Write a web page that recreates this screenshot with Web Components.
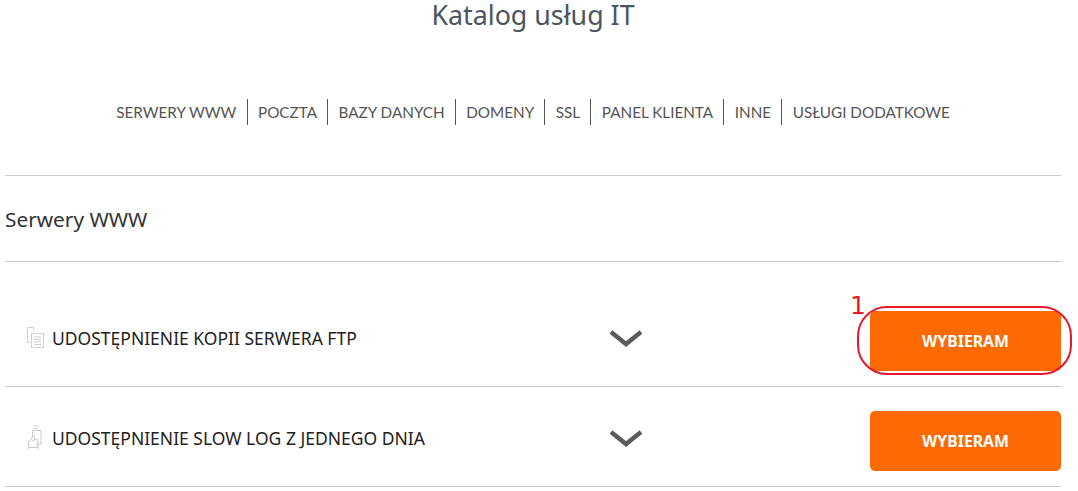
<!DOCTYPE html>
<html lang="pl">
<head>
<meta charset="utf-8">
<title>Katalog usług IT</title>
<style>
  html, body { margin: 0; padding: 0; background: #fff; overflow: hidden; }
  body { font-family: "Noto Sans", "Open Sans", sans-serif; }
</style>
</head>
<body>
<catalog-page heading="Katalog usług IT">
  <catalog-nav slot="nav">
    <nav-link>SERWERY WWW</nav-link>
    <nav-link>POCZTA</nav-link>
    <nav-link>BAZY DANYCH</nav-link>
    <nav-link>DOMENY</nav-link>
    <nav-link>SSL</nav-link>
    <nav-link>PANEL KLIENTA</nav-link>
    <nav-link>INNE</nav-link>
    <nav-link last>USŁUGI DODATKOWE</nav-link>
  </catalog-nav>
  <service-section heading="Serwery WWW">
    <service-row first marked="1" label="UDOSTĘPNIENIE KOPII SERWERA FTP">
      <svg slot="icon" width="17" height="21" viewBox="0 0 17 21" fill="none" stroke="#cfcfcf" stroke-width="1">
        <path d="M6.5 3.5V.5H.5V15.5H3.5"/>
        <rect x="4.5" y="6.5" width="12" height="14" fill="#fff"/>
        <path d="M7 10H14M7 12.5H14M7 15H14M7 17.5H14"/>
      </svg>
    </service-row>
    <service-row label="UDOSTĘPNIENIE SLOW LOG Z JEDNEGO DNIA">
      <svg slot="icon" width="17" height="25" viewBox="0 0 17 25" fill="none" stroke="#c8c8c8" stroke-width="1">
        <path d="M6 1.5C7.5 .3 10 .3 11.5 1.5M7 3.5H10.5"/>
        <path d="M5.5 12V5.5H14V19H11"/>
        <path d="M1.5 24V18L6.5 10.5L8 12L6 16L9 14L11.5 15.5L9.5 20H11V24.5M1.5 22.5H11"/>
      </svg>
    </service-row>
  </service-section>
</catalog-page>

<script>
  customElements.define('catalog-page', class CatalogPage extends HTMLElement {
    constructor() {
      super();
      this.attachShadow({ mode: 'open' });
      this.shadowRoot.innerHTML = `
        <style>
          :host { display: block; padding: 0 17px 0 5px; color: #4c5259; }
          h1 {
            margin: 0;
            height: 30px;
            font: 400 26.8px/30px "Noto Sans", sans-serif;
            text-align: center;
            color: #4c5560;
          }
          .nav { padding-top: 69px; padding-bottom: 50px; border-bottom: 1px solid #ccc; }
        </style>
        <h1></h1>
        <div class="nav"><slot name="nav"></slot></div>
        <slot></slot>
      `;
      this.shadowRoot.querySelector('h1').textContent = this.getAttribute('heading');
    }
  });

  customElements.define('catalog-nav', class CatalogNav extends HTMLElement {
    constructor() {
      super();
      this.attachShadow({ mode: 'open' });
      this.shadowRoot.innerHTML = `
        <style>
          :host { display: flex; justify-content: center; }
        </style>
        <slot></slot>
      `;
    }
  });

  customElements.define('nav-link', class NavLink extends HTMLElement {
    constructor() {
      super();
      this.attachShadow({ mode: 'open' });
      this.shadowRoot.innerHTML = `
        <style>
          :host {
            display: block;
            padding: 0 10.3px;
            height: 26px;
            font: 400 15.25px/26px "Lato", sans-serif;
            color: #555;
            white-space: nowrap;
            border-right: 1px solid #555;
          }
          :host([last]) { border-right: 0; }
        </style>
        <slot></slot>
      `;
    }
  });

  customElements.define('service-section', class ServiceSection extends HTMLElement {
    constructor() {
      super();
      this.attachShadow({ mode: 'open' });
      this.shadowRoot.innerHTML = `
        <style>
          :host { display: block; }
          h2 {
            margin: 0;
            height: 85px;
            font: 400 20.8px/87px "Noto Sans", sans-serif;
            color: #333;
            border-bottom: 1px solid #ccc;
          }
        </style>
        <h2></h2>
        <slot></slot>
      `;
      this.shadowRoot.querySelector('h2').textContent = this.getAttribute('heading');
    }
  });

  customElements.define('service-row', class ServiceRow extends HTMLElement {
    constructor() {
      super();
      this.attachShadow({ mode: 'open' });
      this.shadowRoot.innerHTML = `
        <style>
          :host {
            display: grid;
            grid-template-columns: 47px 558px 1fr;
            align-items: end;
            height: 84px;
            padding-bottom: 15px;
            border-bottom: 1px solid #ccc;
          }
          :host([first]) { height: 109px; }
          .cell { display: flex; align-items: center; min-width: 0; height: 60px; }
          .icon { padding-left: 22px; margin-top: -3px; }
          .icon ::slotted(svg) { margin-top: -8px; }
          .name {
            font: 400 17.5px/20px "Noto Sans", sans-serif;
            color: #222;
            white-space: nowrap;
            margin-top: -6px;
          }
          .arrow { margin-top: -6px; flex: none; }
          .right { justify-content: flex-end; position: relative; }
        </style>
        <div class="cell icon"><slot name="icon"></slot></div>
        <div class="cell"><span class="name"></span><svg class="arrow" style="position:absolute;left:610px" width="32" height="17" viewBox="0 0 32 17" fill="none" stroke="#5c5c5c" stroke-width="4.5"><path d="M1 2L16 14L31 2"/></svg></div>
        <div class="cell right"><pick-button>WYBIERAM</pick-button></div>
      `;
      this.shadowRoot.querySelector('.name').textContent = this.getAttribute('label');
      const mark = this.getAttribute('marked');
      if (mark) this.shadowRoot.querySelector('pick-button').setAttribute('marked', mark);
    }
  });

  customElements.define('pick-button', class PickButton extends HTMLElement {
    static get observedAttributes() { return ['marked']; }
    constructor() {
      super();
      this.attachShadow({ mode: 'open' });
      this.shadowRoot.innerHTML = `
        <style>
          :host {
            display: flex;
            position: relative;
            align-items: center;
            justify-content: center;
            width: 191px;
            height: 60px;
            background: #fd6a02;
            border-radius: 5px;
            color: #fff;
            font: 700 15.8px/20px "Noto Sans", sans-serif;
          }
          .ring {
            display: none;
            position: absolute;
            left: -13px; top: -5px;
            width: 211px; height: 65px;
            border: 2px solid #e8192c;
            border-radius: 30px;
          }
          .num {
            display: none;
            position: absolute;
            left: -20px; top: -19px;
            font: 400 25px/28px "DejaVu Sans", sans-serif;
            color: #e8192c;
          }
          :host([marked]) .ring, :host([marked]) .num { display: block; }
        </style>
        <slot></slot>
        <span class="ring"></span>
        <span class="num"></span>
      `;
    }
    attributeChangedCallback(name, oldValue, newValue) {
      this.shadowRoot.querySelector('.num').textContent = newValue;
    }
  });
</script>
</body>
</html>
